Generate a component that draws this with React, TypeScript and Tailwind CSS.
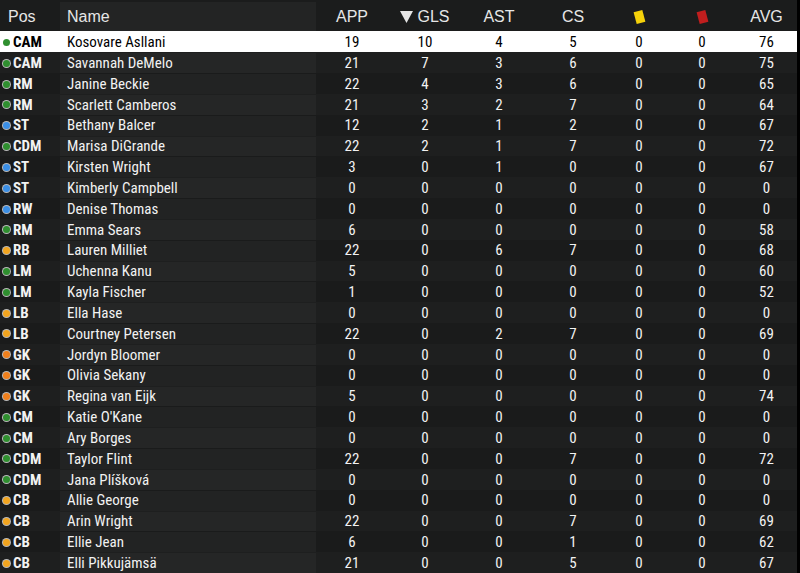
import React from "react";

type Player = {
  pos: string;
  name: string;
  stats: number[];
  dot: "green" | "blue" | "orange" | "gk";
};

const PLAYERS: Player[] = [
  { pos: "CAM", name: "Kosovare Asllani", stats: [19, 10, 4, 5, 0, 0, 76], dot: "green" },
  { pos: "CAM", name: "Savannah DeMelo", stats: [21, 7, 3, 6, 0, 0, 75], dot: "green" },
  { pos: "RM", name: "Janine Beckie", stats: [22, 4, 3, 6, 0, 0, 65], dot: "green" },
  { pos: "RM", name: "Scarlett Camberos", stats: [21, 3, 2, 7, 0, 0, 64], dot: "green" },
  { pos: "ST", name: "Bethany Balcer", stats: [12, 2, 1, 2, 0, 0, 67], dot: "blue" },
  { pos: "CDM", name: "Marisa DiGrande", stats: [22, 2, 1, 7, 0, 0, 72], dot: "green" },
  { pos: "ST", name: "Kirsten Wright", stats: [3, 0, 1, 0, 0, 0, 67], dot: "blue" },
  { pos: "ST", name: "Kimberly Campbell", stats: [0, 0, 0, 0, 0, 0, 0], dot: "blue" },
  { pos: "RW", name: "Denise Thomas", stats: [0, 0, 0, 0, 0, 0, 0], dot: "blue" },
  { pos: "RM", name: "Emma Sears", stats: [6, 0, 0, 0, 0, 0, 58], dot: "green" },
  { pos: "RB", name: "Lauren Milliet", stats: [22, 0, 6, 7, 0, 0, 68], dot: "orange" },
  { pos: "LM", name: "Uchenna Kanu", stats: [5, 0, 0, 0, 0, 0, 60], dot: "green" },
  { pos: "LM", name: "Kayla Fischer", stats: [1, 0, 0, 0, 0, 0, 52], dot: "green" },
  { pos: "LB", name: "Ella Hase", stats: [0, 0, 0, 0, 0, 0, 0], dot: "orange" },
  { pos: "LB", name: "Courtney Petersen", stats: [22, 0, 2, 7, 0, 0, 69], dot: "orange" },
  { pos: "GK", name: "Jordyn Bloomer", stats: [0, 0, 0, 0, 0, 0, 0], dot: "gk" },
  { pos: "GK", name: "Olivia Sekany", stats: [0, 0, 0, 0, 0, 0, 0], dot: "gk" },
  { pos: "GK", name: "Regina van Eijk", stats: [5, 0, 0, 0, 0, 0, 74], dot: "gk" },
  { pos: "CM", name: "Katie O'Kane", stats: [0, 0, 0, 0, 0, 0, 0], dot: "green" },
  { pos: "CM", name: "Ary Borges", stats: [0, 0, 0, 0, 0, 0, 0], dot: "green" },
  { pos: "CDM", name: "Taylor Flint", stats: [22, 0, 0, 7, 0, 0, 72], dot: "green" },
  { pos: "CDM", name: "Jana Plíšková", stats: [0, 0, 0, 0, 0, 0, 0], dot: "green" },
  { pos: "CB", name: "Allie George", stats: [0, 0, 0, 0, 0, 0, 0], dot: "orange" },
  { pos: "CB", name: "Arin Wright", stats: [22, 0, 0, 7, 0, 0, 69], dot: "orange" },
  { pos: "CB", name: "Ellie Jean", stats: [6, 0, 0, 1, 0, 0, 62], dot: "orange" },
  { pos: "CB", name: "Elli Pikkujämsä", stats: [21, 0, 0, 5, 0, 0, 67], dot: "orange" },
];

const DOT: Record<Player["dot"], string> = {
  green: "bg-[#2f8f2f]",
  blue: "bg-[#3b8fe6]",
  orange: "bg-[#f2a51f]",
  gk: "bg-[#f0801c]",
};

// stat column widths: APP GLS AST CS Y R AVG
const COLS = ["w-[72px]", "w-[74px]", "w-[74px]", "w-[74px]", "w-[58px]", "w-[68px]", "w-[61px]"];

const cond = { fontFamily: '"Liberation Sans Narrow", "Roboto Condensed", "Liberation Sans", sans-serif' };
const head = { fontFamily: '"Liberation Sans", Arial, sans-serif' };

function Card({ color }: { color: string }) {
  return <span className={`inline-block w-[9px] h-[12px] rotate-[-15deg] ${color}`} />;
}

export default function App() {
  return (
    <div className="w-[800px] h-[573px] bg-black overflow-hidden">
      <div className="w-[797px] h-[573px] flex flex-col bg-[#1b1c1c]">
        {/* Header */}
        <div className="flex h-[32px] items-center pt-[2px] text-[16px] text-[#e6e6e6]" style={head}>
          <div className="w-[60px] h-full flex items-center pl-[8px] bg-[#1b1c1c]">Pos</div>
          <div className="w-[256px] h-full flex items-center pl-[7px] bg-[#232424]">Name</div>
          <div className={`${COLS[0]} text-center`}>APP</div>
          <div className={`${COLS[1]} flex items-center justify-center gap-[4px]`}>
            <svg width="13" height="12" viewBox="0 0 13 12">
              <polygon points="0,0 13,0 6.5,12" fill="#e6e6e6" />
            </svg>
            GLS
          </div>
          <div className={`${COLS[2]} text-center`}>AST</div>
          <div className={`${COLS[3]} text-center`}>CS</div>
          <div className={`${COLS[4]} flex justify-center`}>
            <Card color="bg-[#f5d10a]" />
          </div>
          <div className={`${COLS[5]} flex justify-center`}>
            <Card color="bg-[#c01e1e]" />
          </div>
          <div className={`${COLS[6]} text-center`}>AVG</div>
        </div>

        {/* Rows */}
        {PLAYERS.map((p, i) => {
          const sel = i === 0;
          const alt = i % 2 === 1;
          return (
            <div
              key={p.name}
              className={`flex h-[20.84px] items-center pt-[1px] text-[15px] ${
                sel ? "bg-white text-black" : alt ? "bg-[#1e1f1f] text-[#f2f2f2]" : "bg-[#1a1b1b] text-[#f2f2f2]"
              }`}
              style={cond}
            >
              <div className="w-[60px] h-full flex items-center pl-[3px] gap-[3px]">
                <span
                  className={`w-[7px] h-[7px] rounded-full ${DOT[p.dot]} ${
                    sel ? "" : "ring-1 ring-[#e0e0e0]/80"
                  }`}
                />
                <span className="font-bold">{p.pos}</span>
              </div>
              <div
                className={`w-[256px] h-full flex items-center pl-[7px] ${
                  sel ? "" : alt ? "bg-[#252626]" : "bg-[#222323]"
                }`}
              >
                {p.name}
              </div>
              {p.stats.map((s, j) => (
                <div key={j} className={`${COLS[j]} text-center`}>
                  {s}
                </div>
              ))}
            </div>
          );
        })}
      </div>
    </div>
  );
}
